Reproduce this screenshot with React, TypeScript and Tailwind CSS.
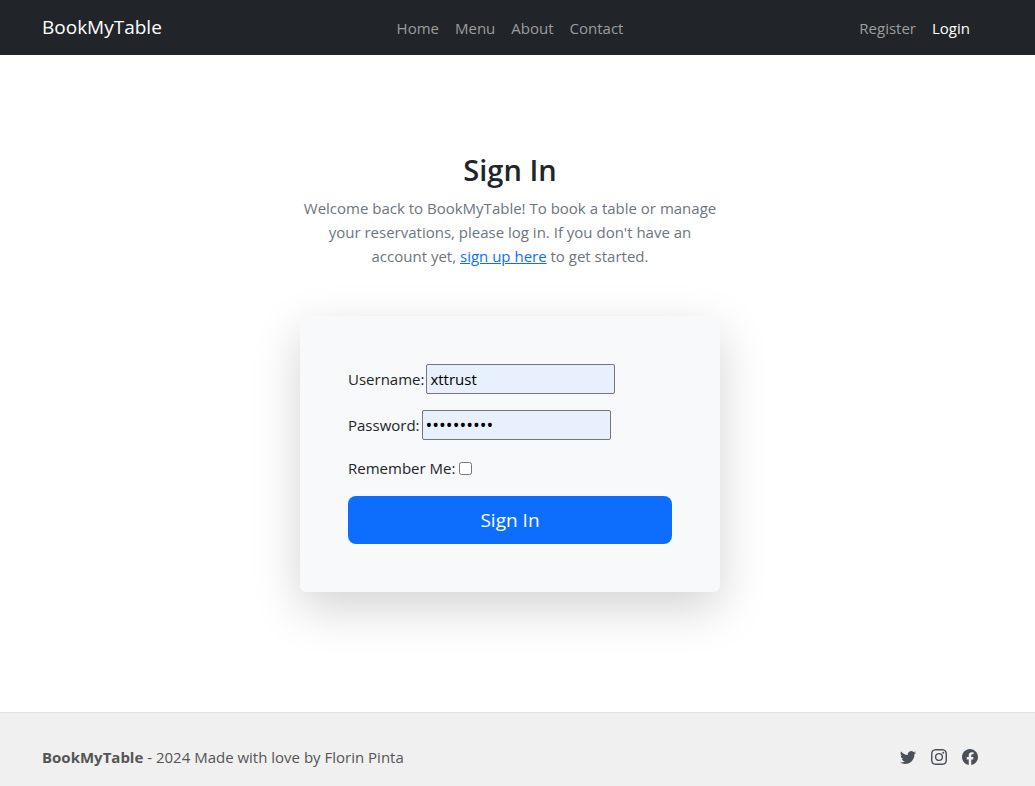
import { useState } from "react";
import type { ReactNode } from "react";
import { BsFacebook, BsInstagram, BsTwitter } from "react-icons/bs";

function Container({ children }: { children: ReactNode }) {
  return (
    <div className="mx-auto flex w-full max-w-[960px] items-center px-3">{children}</div>
  );
}

function NavLink({ label, active = false }: { label: string; active?: boolean }) {
  return (
    <li>
      <a
        href="#"
        aria-current={active ? "page" : undefined}
        className={active ? "px-2 text-white" : "px-2 text-[#9b9d9e] hover:text-white"}
      >
        {label}
      </a>
    </li>
  );
}

function Header() {
  return (
    <header className="flex h-[55px] shrink-0 items-center bg-[#212529] pr-[15px]">
      <Container>
        <div className="flex-1">
          <a href="#" className="text-[19px] leading-6 text-white">
            BookMyTable
          </a>
        </div>
        <nav aria-label="Main">
          <ul className="flex">
            <NavLink label="Home" />
            <NavLink label="Menu" />
            <NavLink label="About" />
            <NavLink label="Contact" />
          </ul>
        </nav>
        <nav aria-label="Account" className="flex-1">
          <ul className="flex justify-end">
            <NavLink label="Register" />
            <NavLink label="Login" active />
          </ul>
        </nav>
      </Container>
    </header>
  );
}

const inputClass =
  "h-[30px] w-[189px] rounded-[2px] border border-[#767676] bg-[#e8f0fe] px-[3px] text-black";

function SignInForm() {
  const [username, setUsername] = useState("xttrust");
  const [password, setPassword] = useState("tablefor10");
  const [remember, setRemember] = useState(false);

  return (
    <form
      onSubmit={(e) => e.preventDefault()}
      className="flex flex-col gap-4 rounded-md bg-[#f8f9fa] p-12 shadow-[0_16px_48px_rgba(0,0,0,0.176)]"
    >
      <div className="flex items-center gap-0.5">
        <label htmlFor="username">Username:</label>
        <input
          id="username"
          type="text"
          value={username}
          onChange={(e) => setUsername(e.target.value)}
          className={inputClass}
        />
      </div>
      <div className="flex items-center gap-0.5">
        <label htmlFor="password">Password:</label>
        <input
          id="password"
          type="password"
          value={password}
          onChange={(e) => setPassword(e.target.value)}
          className={`${inputClass} text-lg`}
        />
      </div>
      <div className="flex items-center gap-1">
        <label htmlFor="remember">Remember Me:</label>
        <input
          id="remember"
          type="checkbox"
          checked={remember}
          onChange={(e) => setRemember(e.target.checked)}
          className="size-[13px]"
        />
      </div>
      <button
        type="submit"
        className="h-12 rounded-lg bg-[#0d6efd] text-[19px] text-white hover:bg-[#0b5ed7]"
      >
        Sign In
      </button>
    </form>
  );
}

function Footer() {
  return (
    <footer className="grow border-t border-[#dee2e6] bg-[#f0f0f0] pt-8 pr-[15px] pb-4 text-[#555555]">
      <Container>
        <p className="flex-1">
          <strong className="font-bold">BookMyTable</strong> - 2024 Made with love by Florin Pinta
        </p>
        <ul className="flex gap-[15px] text-[#495057]">
          <li>
            <a href="#" aria-label="Twitter">
              <BsTwitter size={16} />
            </a>
          </li>
          <li>
            <a href="#" aria-label="Instagram">
              <BsInstagram size={16} />
            </a>
          </li>
          <li>
            <a href="#" aria-label="Facebook">
              <BsFacebook size={16} />
            </a>
          </li>
        </ul>
      </Container>
    </footer>
  );
}

export default function App() {
  return (
    <div className="flex min-h-screen flex-col bg-white font-['Open_Sans','Noto_Sans',sans-serif] text-[15px] leading-6 text-[#212529]">
      <Header />
      <main className="pt-24 pr-[15px] pb-[120px]">
        <div className="mx-auto max-w-[420px]">
          <h1 className="mb-[7px] text-center text-[29px] leading-[38px] font-semibold">Sign In</h1>
          <p className="mb-12 text-center text-[#6c757d]">
            Welcome back to BookMyTable! To book a table or manage your reservations, please log in.
            If you don't have an account yet,{" "}
            <a href="#" className="text-[#0d6efd] underline">
              sign up here
            </a>{" "}
            to get started.
          </p>
          <SignInForm />
        </div>
      </main>
      <Footer />
    </div>
  );
}
